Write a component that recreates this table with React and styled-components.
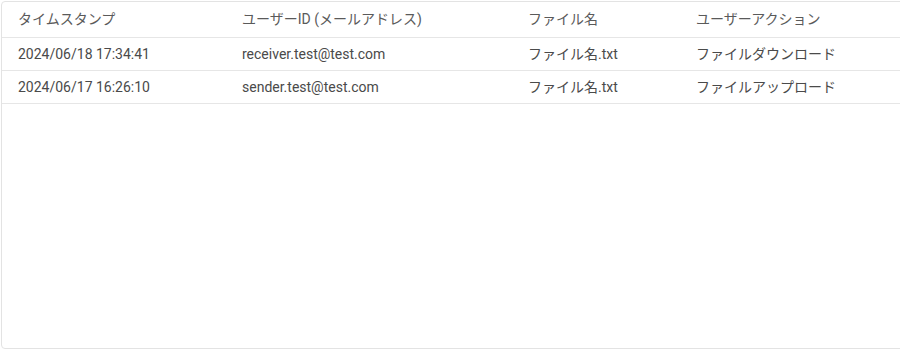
import styled, { createGlobalStyle } from 'styled-components'

const GlobalStyle = createGlobalStyle`
    html, body {
        margin: 0;
        padding: 0;
        background: #ffffff;
    }

    body {
        font-family: Roboto, 'Noto Sans CJK JP', sans-serif;
    }
`

const Page = styled.div`
    padding: 1px 0 0 1px;
    width: 900px;
    overflow: hidden;
`

const LogPanel = styled.div`
    width: 920px;
    height: 346px;
    border: 1px solid #e3e3e3;
    border-radius: 4px;
    background: #ffffff;
    box-sizing: content-box;
`

const LogTable = styled.table`
    width: 100%;
    border-collapse: collapse;
    table-layout: fixed;
`

const HeadCell = styled.th`
    width: ${(props) => props.width || 'auto'};
    height: 35px;
    padding: 0 16px;
    text-align: left;
    vertical-align: middle;
    font-weight: 400;
    font-size: 14px;
    line-height: 16px;
    color: #5a5a5a;
    border-bottom: 1px solid #e6e6e6;
    white-space: nowrap;
    box-sizing: border-box;
`

const Row = styled.tr`
    border-bottom: 1px solid #e6e6e6;
`

const Cell = styled.td`
    height: 32px;
    padding: 0 16px;
    vertical-align: middle;
    font-size: 14px;
    line-height: 16px;
    color: #4a4a4a;
    white-space: nowrap;
`

const columns = [
    { label: 'タイムスタンプ', width: '224px' },
    { label: 'ユーザーID (メールアドレス)', width: '286px' },
    { label: 'ファイル名', width: '168px' },
    { label: 'ユーザーアクション' },
]

const logs = [
    {
        time: '2024/06/18 17:34:41',
        user: 'receiver.test@test.com',
        file: 'ファイル名.txt',
        action: 'ファイルダウンロード',
    },
    {
        time: '2024/06/17 16:26:10',
        user: 'sender.test@test.com',
        file: 'ファイル名.txt',
        action: 'ファイルアップロード',
    },
]

export default function App() {
    return (
        <>
            <GlobalStyle />
            <Page>
                <LogPanel>
                    <LogTable>
                        <thead>
                            <tr>
                                {columns.map((col) => (
                                    <HeadCell key={col.label} width={col.width}>
                                        {col.label}
                                    </HeadCell>
                                ))}
                            </tr>
                        </thead>
                        <tbody>
                            {logs.map((log) => (
                                <Row key={log.time}>
                                    <Cell>{log.time}</Cell>
                                    <Cell>{log.user}</Cell>
                                    <Cell>{log.file}</Cell>
                                    <Cell>{log.action}</Cell>
                                </Row>
                            ))}
                        </tbody>
                    </LogTable>
                </LogPanel>
            </Page>
        </>
    )
}
